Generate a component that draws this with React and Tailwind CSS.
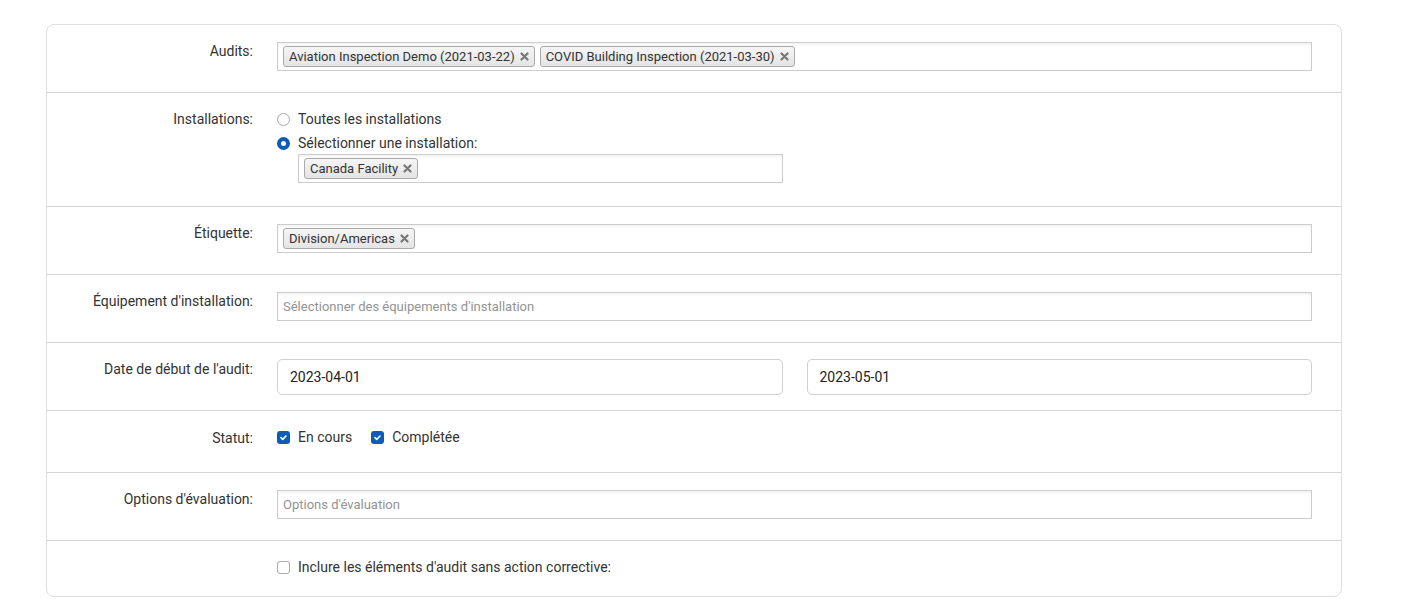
import { useState } from 'react'

function Tag({ label }) {
  return (
    <span className="inline-flex items-center h-[21px] px-[5px] gap-[5px] rounded-[3px] border border-[#aaa] bg-linear-to-b from-[#f6f6f6] to-[#e4e4e4] text-[13px] text-[#333] leading-none">
      {label}
      <svg width="9" height="9" viewBox="0 0 9 9" className="text-[#777]">
        <path d="M1.5 1.5l6 6M7.5 1.5l-6 6" stroke="currentColor" strokeWidth="2.2" strokeLinecap="round" />
      </svg>
    </span>
  )
}

function TagInput({ tags, placeholder, className = '' }) {
  return (
    <div className={`h-[29px] border border-[#ccc] bg-white shadow-[inset_0_2px_3px_rgba(0,0,0,0.05)] flex items-center gap-[5px] pl-[5px] ${className}`}>
      {tags && tags.map((t) => <Tag key={t} label={t} />)}
      {placeholder && <span className="text-[13px] text-[#939393]">{placeholder}</span>}
    </div>
  )
}

function Check({ checked }) {
  return checked ? (
    <span className="w-[13px] h-[13px] rounded-[3px] bg-[#0d5cb6] flex items-center justify-center">
      <svg width="9" height="9" viewBox="0 0 9 9">
        <path d="M2 4.6l1.8 1.8L7 3" stroke="white" strokeWidth="1.6" fill="none" strokeLinecap="round" strokeLinejoin="round" />
      </svg>
    </span>
  ) : (
    <span className="w-[13px] h-[13px] rounded-[3px] border border-[#aaa] bg-white" />
  )
}

function Radio({ checked }) {
  return checked ? (
    <span className="w-[13px] h-[13px] rounded-full border-[4px] border-[#0d5cb6] bg-white" />
  ) : (
    <span className="w-[13px] h-[13px] rounded-full border border-[#aaa] bg-white" />
  )
}

function Row({ label, children, pt = 'pt-[15px]', pb, last }) {
  return (
    <div className={`flex items-start ${pt} ${pb} ${last ? '' : 'border-b border-[#d4d4d4]'}`}>
      <div className="w-[206px] shrink-0 mt-[1px] text-right text-[14px] leading-[20px] text-[#333]">{label}</div>
      <div className="ml-[24px] w-[1035px]">{children}</div>
    </div>
  )
}

export default function App() {
  const [statut] = useState({ enCours: true, completee: true })

  return (
    <div className="min-h-screen bg-white pt-[24px] pl-[46px] font-['Roboto',sans-serif] text-[#333]">
      <div className="w-[1296px] border border-[#dedede] rounded-[8px] overflow-hidden">
        <Row label="Audits:" pb="pb-[21px]">
          <TagInput className="mt-[2px]" tags={['Aviation Inspection Demo (2021-03-22)', 'COVID Building Inspection (2021-03-30)']} />
        </Row>

        <Row label="Installations:" pb="pb-[23px]">
          <div className="flex flex-col gap-[4px] pt-[1px] text-[14px] leading-[20px]">
            <label className="flex items-center gap-[8px]">
              <Radio />
              Toutes les installations
            </label>
            <label className="flex items-center gap-[8px]">
              <Radio checked />
              Sélectionner une installation:
            </label>
          </div>
          <TagInput className="mt-[1px] ml-[21px] w-[485px]" tags={['Canada Facility']} />
        </Row>

        <Row label="Étiquette:" pb="pb-[21px]">
          <TagInput className="mt-[2px]" tags={['Division/Americas']} />
        </Row>

        <Row label="Équipement d'installation:" pb="pb-[21px]">
          <TagInput className="mt-[2px]" placeholder="Sélectionner des équipements d'installation" />
        </Row>

        <Row label="Date de début de l'audit:" pb="pb-[15px]">
          <div className="mt-[1px] grid grid-cols-2 gap-[24px]">
            <div className="h-[36px] border border-[#d0d0d0] rounded-[5px] flex items-center px-[12px] text-[14px] text-[#222]">2023-04-01</div>
            <div className="h-[36px] border border-[#d0d0d0] rounded-[5px] flex items-center px-[12px] text-[14px] text-[#222]">2023-05-01</div>
          </div>
        </Row>

        <Row label="Statut:" pt="pt-[16px]" pb="pb-[24px]">
          <div className="flex items-center text-[14px] leading-[20px]">
            <label className="flex items-center gap-[8px]">
              <Check checked={statut.enCours} />
              En cours
            </label>
            <label className="flex items-center gap-[8px] ml-[19px]">
              <Check checked={statut.completee} />
              Complétée
            </label>
          </div>
        </Row>

        <Row label="Options d'évaluation:" pb="pb-[21px]">
          <TagInput className="mt-[2px]" placeholder="Options d'évaluation" />
        </Row>

        <Row label="" pt="pt-[16px]" pb="pb-[19px]" last>
          <label className="flex items-center gap-[8px] text-[14px] leading-[20px]">
            <Check />
            Inclure les éléments d'audit sans action corrective:
          </label>
        </Row>
      </div>
    </div>
  )
}
